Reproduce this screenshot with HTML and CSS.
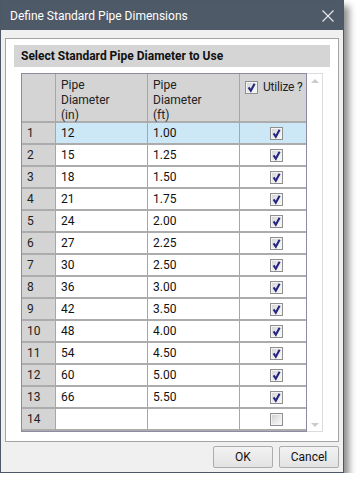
FILE: index.html
```html
<!DOCTYPE html>
<html>
<head>
<meta charset="utf-8">
<link rel="stylesheet" href="styles.css">
</head>
<body>
<div class="dialog">
  <div class="titlebar">
    <span class="title">Define Standard Pipe Dimensions</span>
    <svg class="close" width="12" height="12" viewBox="0 0 12 12"><path d="M0.5 0.5 L11.5 11.5 M11.5 0.5 L0.5 11.5" stroke="#e8eaee" stroke-width="1.1" fill="none"/></svg>
  </div>
  <div class="content">
    <div class="panel">
      <div class="section-head">Select Standard Pipe Diameter to Use</div>
      <div class="grid-wrap">
        <div class="grid">
          <div class="hc rh"></div>
          <div class="hc">Pipe<br>Diameter<br>(in)</div>
          <div class="hc">Pipe<br>Diameter<br>(ft)</div>
          <div class="hc util"><span class="cb"><svg viewBox="0 0 13 13"><path d="M3.6 6.4 L5.8 9.8 L9.6 2.8" /></svg></span><span class="util-label">Utilize ?</span></div>

          <div class="rh">1</div><div class="c sel">12</div><div class="c sel">1.00</div><div class="c ck sel"><span class="cb"><svg viewBox="0 0 13 13"><path d="M3.6 6.4 L5.8 9.8 L9.6 2.8" /></svg></span></div>
          <div class="rh">2</div><div class="c">15</div><div class="c">1.25</div><div class="c ck"><span class="cb"><svg viewBox="0 0 13 13"><path d="M3.6 6.4 L5.8 9.8 L9.6 2.8" /></svg></span></div>
          <div class="rh">3</div><div class="c">18</div><div class="c">1.50</div><div class="c ck"><span class="cb"><svg viewBox="0 0 13 13"><path d="M3.6 6.4 L5.8 9.8 L9.6 2.8" /></svg></span></div>
          <div class="rh">4</div><div class="c">21</div><div class="c">1.75</div><div class="c ck"><span class="cb"><svg viewBox="0 0 13 13"><path d="M3.6 6.4 L5.8 9.8 L9.6 2.8" /></svg></span></div>
          <div class="rh">5</div><div class="c">24</div><div class="c">2.00</div><div class="c ck"><span class="cb"><svg viewBox="0 0 13 13"><path d="M3.6 6.4 L5.8 9.8 L9.6 2.8" /></svg></span></div>
          <div class="rh">6</div><div class="c">27</div><div class="c">2.25</div><div class="c ck"><span class="cb"><svg viewBox="0 0 13 13"><path d="M3.6 6.4 L5.8 9.8 L9.6 2.8" /></svg></span></div>
          <div class="rh">7</div><div class="c">30</div><div class="c">2.50</div><div class="c ck"><span class="cb"><svg viewBox="0 0 13 13"><path d="M3.6 6.4 L5.8 9.8 L9.6 2.8" /></svg></span></div>
          <div class="rh">8</div><div class="c">36</div><div class="c">3.00</div><div class="c ck"><span class="cb"><svg viewBox="0 0 13 13"><path d="M3.6 6.4 L5.8 9.8 L9.6 2.8" /></svg></span></div>
          <div class="rh">9</div><div class="c">42</div><div class="c">3.50</div><div class="c ck"><span class="cb"><svg viewBox="0 0 13 13"><path d="M3.6 6.4 L5.8 9.8 L9.6 2.8" /></svg></span></div>
          <div class="rh">10</div><div class="c">48</div><div class="c">4.00</div><div class="c ck"><span class="cb"><svg viewBox="0 0 13 13"><path d="M3.6 6.4 L5.8 9.8 L9.6 2.8" /></svg></span></div>
          <div class="rh">11</div><div class="c">54</div><div class="c">4.50</div><div class="c ck"><span class="cb"><svg viewBox="0 0 13 13"><path d="M3.6 6.4 L5.8 9.8 L9.6 2.8" /></svg></span></div>
          <div class="rh">12</div><div class="c">60</div><div class="c">5.00</div><div class="c ck"><span class="cb"><svg viewBox="0 0 13 13"><path d="M3.6 6.4 L5.8 9.8 L9.6 2.8" /></svg></span></div>
          <div class="rh">13</div><div class="c">66</div><div class="c">5.50</div><div class="c ck"><span class="cb"><svg viewBox="0 0 13 13"><path d="M3.6 6.4 L5.8 9.8 L9.6 2.8" /></svg></span></div>
          <div class="rh">14</div><div class="c"></div><div class="c"></div><div class="c ck"><span class="cb empty"></span></div>
        </div>
        <div class="scrollbar"><span class="arrow up"></span><span class="arrow down"></span></div>
      </div>
    </div>
    <div class="buttons">
      <button class="btn">OK</button>
      <button class="btn">Cancel</button>
    </div>
  </div>
</div>
</body>
</html>
```
FILE: styles.css
```css
* { box-sizing: border-box; }
html, body { margin: 0; padding: 0; background: #ffffff; }
body { font-family: Roboto, "Noto Sans", sans-serif; font-size: 12px; color: #111; }

.dialog {
  width: 344px;
  height: 473px;
  border: 1px solid #4d5866;
  background: #f0f0f0;
  box-shadow: 5px 6px 7px rgba(0, 0, 0, 0.45);
  display: flex;
  flex-direction: column;
}

.titlebar {
  height: 29px;
  background: #4f5a68;
  display: flex;
  align-items: center;
  justify-content: space-between;
  padding: 0 9px 0 9px;
  color: #ffffff;
  flex: none;
}
.title { font-size: 12px; letter-spacing: 0; }
.close { display: block; margin-top: 1px; }

.content { padding: 8px 4px 0 4px; flex: 1; display: flex; flex-direction: column; }

.panel {
  height: 404px;
  border: 1px solid #a3a3a3;
  background: #ffffff;
  padding: 6px 8px 9px 8px;
}

.section-head {
  height: 22px;
  background: #d5d5d5;
  font-weight: bold;
  padding-left: 7px;
  display: flex;
  align-items: center;
  color: #111;
}

.grid-wrap {
  margin: 6px 7px 0 7px;
  display: flex;
  height: 359px;
}

.grid {
  width: 286px;
  border: 1px solid #8b8ba3;
  display: grid;
  grid-template-columns: 34px 92px 92px 66px;
  grid-template-rows: 49px repeat(14, 22px);
  background: #ffffff;
}

.grid > div {
  border-bottom: 2px solid #acacac;
  border-right: 1px solid #a6a6a6;
}
.grid > div:nth-child(4n) { border-right: none; }

.hc {
  background: #d4d4d4;
  padding: 4px 5px 0 5px;
  line-height: 15px;
  color: #222;
}
.rh {
  background: #d4d4d4;
  padding-left: 5px;
  display: flex;
  align-items: center;
  color: #222;
}
.c {
  padding-left: 5px;
  display: flex;
  align-items: center;
}
.sel { background: #cce8f6; }
.ck { justify-content: center; padding-left: 6px; padding-top: 1px; }

.util { display: flex; align-items: flex-start; padding-top: 7px; gap: 5px; white-space: nowrap; overflow: visible; }
.util-label { line-height: 13px; letter-spacing: -0.2px; }

.cb {
  width: 13px;
  height: 13px;
  border: 1px solid #8f8f8f;
  background: linear-gradient(135deg, #d2d2d2 0%, #eeeeee 60%, #fafafa 100%);
  box-shadow: inset 0 0 0 1px #f4f4f4;
  display: inline-block;
  flex: none;
  position: relative;
}
.cb svg { position: absolute; left: -1px; top: -1px; width: 13px; height: 13px; }
.cb svg path { fill: none; stroke: #262680; stroke-width: 2.1; stroke-linecap: butt; stroke-linejoin: miter; }
.cb.empty { background: linear-gradient(135deg, #cfcfcf 0%, #ececec 60%, #fbfbfb 100%); }

.scrollbar {
  width: 16px;
  border: 1px solid #dcdcdc;
  border-left: none;
  background: #ffffff;
  display: flex;
  flex-direction: column;
  justify-content: space-between;
  align-items: center;
  padding: 5px 0 4px 0;
}
.arrow { width: 0; height: 0; border-left: 4px solid transparent; border-right: 4px solid transparent; }
.arrow.up { border-bottom: 4px solid #cbcbcb; }
.arrow.down { border-top: 4px solid #cbcbcb; }

.buttons {
  display: flex;
  justify-content: flex-end;
  gap: 6px;
  margin-top: 4px;
}
.btn {
  width: 60px;
  height: 22px;
  border: 1px solid #acacac;
  border-radius: 2px;
  background: linear-gradient(#f2f2f2, #e3e3e3);
  font-family: Roboto, "Noto Sans", sans-serif;
  font-size: 12px;
  color: #111;
  padding: 0;
}
```
